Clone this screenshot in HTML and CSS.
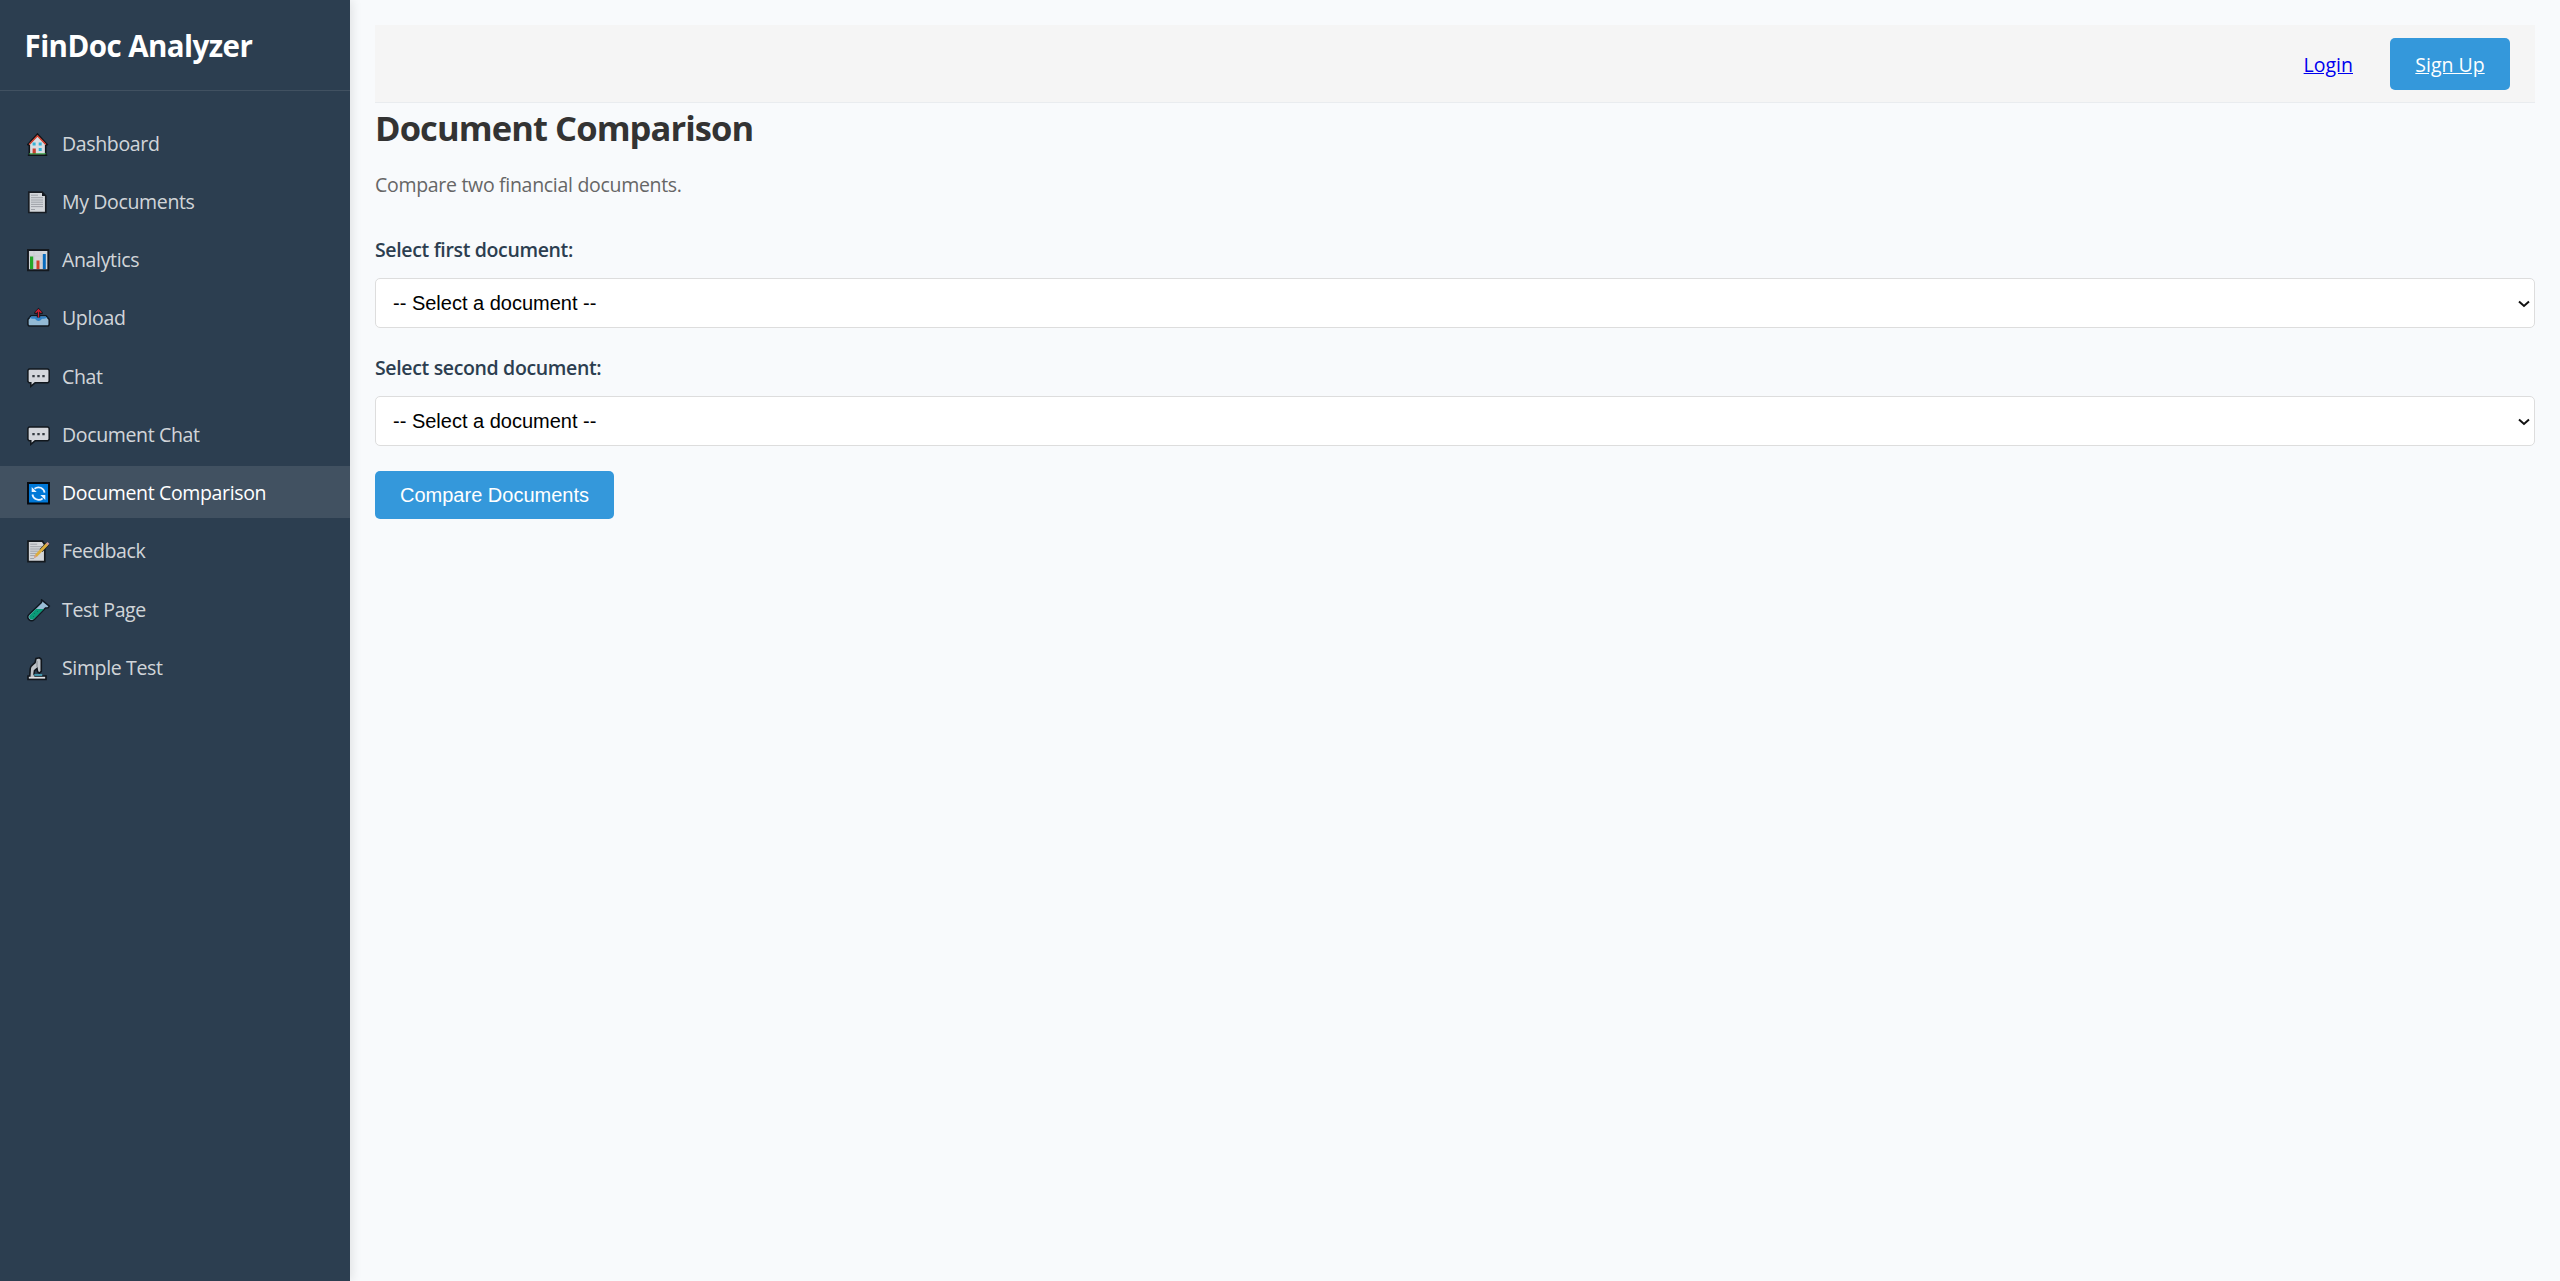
FILE: index.html
```html
<!DOCTYPE html>
<html lang="en">
<head>
<meta charset="utf-8">
<title>FinDoc Analyzer</title>
<link rel="stylesheet" href="styles.css">
</head>
<body>
<div class="app">
  <aside class="sidebar">
    <div class="brand">FinDoc Analyzer</div>
    <nav class="nav">
      <a class="nav-item"><svg class="icon" viewBox="0 0 24 24"><path d="M.8 11.5 10.5 1l9.700 10.500-1.500 1v9.800H2.300v-9.800z" fill="#d8dce1" stroke="#101418" stroke-width="1.600"/><path d="M2.200 11.500 10.500 2.800l8.300 8.700" fill="none" stroke="#cf3d2c" stroke-width="1.500"/><path d="M5.600 9.500h3v3h-3zM11.700 9.500h3v3h-3zM11.700 15h3v3h-3z" fill="#35b1d6"/><path d="M5.600 15.500h3.200v5.500H5.600z" fill="#ca3e2e"/><path d="M2 20.300h17v1.200H2z" fill="#2b9b35"/><path d="M.8 22.300h19.500" stroke="#101418" stroke-width="1.300"/></svg><span>Dashboard</span></a>
      <a class="nav-item"><svg class="icon" viewBox="0 0 24 24"><path d="M1.800 1.200h13.400L18.800 5v16.500h-17z" fill="#d3d6da" stroke="#171c23" stroke-width="1.700"/><path d="M15 1v4h4z" fill="#171c23"/><path d="M4 4.200h7M4 6.700h12M4 9h12M4 11.200h12M4 13.400h12M4 15.600h12M4 18.500h4" stroke="#9ea2a8"/></svg><span>My Documents</span></a>
      <a class="nav-item"><svg class="icon" viewBox="0 0 24 24"><path d="M1 1h20.300v20.300H1z" fill="#d2d5d9" stroke="#14191f" stroke-width="1.900"/><path d="M7 2v18M14 2v18M2 7h18M2 14h18" stroke="#c0c3c9" stroke-width=".5"/><path d="M3 7.500h3.200V20H3z" fill="#23a727"/><path d="M9.500 11.500h3V20h-3z" fill="#cf4227"/><path d="M15.800 5h3v15h-3z" fill="#086bbd"/></svg><span>Analytics</span></a>
      <a class="nav-item"><svg class="icon" viewBox="0 0 24 24"><path d="M.9 12.500 4 8.800h15l3.200 3.700v5.200l-1 1.200H2l-1.100-1.200z" fill="#93b9d4" stroke="#11171e" stroke-width="1.500"/><path d="M2.500 10.800 4.500 9.500h14l2 1.300-3.500 1h-2q-3.500 4.500-7 0H5z" fill="#3182c6"/><path d="m11.500.8 4.200 4.500v1.600h-2.500v3.700H9.800V6.900H7.300V5.300z" fill="#11171e"/><path d="M11.500 10.500V3M8.600 5.700l2.900-3 2.900 3" fill="none" stroke="#c91f32" stroke-width="1.300"/></svg><span>Upload</span></a>
      <a class="nav-item"><svg class="icon" viewBox="0 0 24 24"><path d="M2.100 2.900h18.800l1.300 1.300v11.300l-1.300 1.300H8.100l-4.300 3.500v-3.500H2.100L.9 15.500V4.200z" fill="#d5d7dc" stroke="#11171d" stroke-width="1.500"/><path d="M5.300 8.900h2.400v2.400H5.300zM10.300 8.900h2.400v2.400h-2.400zM15.300 8.900h2.400v2.400h-2.400z" fill="#343a40"/></svg><span>Chat</span></a>
      <a class="nav-item"><svg class="icon" viewBox="0 0 24 24"><path d="M2.100 2.900h18.800l1.300 1.300v11.300l-1.300 1.300H8.100l-4.300 3.500v-3.500H2.100L.9 15.500V4.200z" fill="#d5d7dc" stroke="#11171d" stroke-width="1.500"/><path d="M5.300 8.900h2.400v2.400H5.300zM10.300 8.900h2.400v2.400h-2.400zM15.300 8.900h2.400v2.400h-2.400z" fill="#343a40"/></svg><span>Document Chat</span></a>
      <a class="nav-item active"><svg class="icon" viewBox="0 0 24 24"><path d="M1 1h21v20.500H1z" fill="#0078d7" stroke="#05090f" stroke-width="1.900"/><path d="M7.500 6.700c4-3 9.500-.8 10.100 4M15.600 16.500c-4 3-9.500.5-10.200-4" fill="none" stroke="#e9f4ff" stroke-width="1.700"/><path d="M4.700 5v5h5zM18.300 18v-5h-5z" fill="#e9f4ff"/></svg><span>Document Comparison</span></a>
      <a class="nav-item"><svg class="icon" viewBox="0 0 24 24"><path d="M1 1.200h14.500l2.300 3.500v16.900H1z" fill="#d3d5d8" stroke="#14191e" stroke-width="1.700"/><path d="M3.200 4.200h7M3.200 6.700h12M3.200 9h11M3.200 11.200h10M3.200 13.400h8M3.200 15.600h7M3.200 18.500h4" stroke="#a0a3a8"/><path d="M14 10.700 20.500 3.800" stroke="#14191e" stroke-width="4"/><path d="m7 18 1-3.200L19 3.300l2.200 2L10 16.800z" fill="#dcae3d"/><path d="m7 18 1-3.200 2 2zM18.800 3.600l1.700-1.500 1.800 1.700-1.500 1.700z" fill="#d49b95"/></svg><span>Feedback</span></a>
      <a class="nav-item"><svg class="icon" viewBox="0 0 24 24"><path d="m14.600.8 7.700 6.400-1.200 1.500-2.600.2L7.300 20.400c-3.500 3.500-8.700-1.200-5.300-5L14.500 3.500z" fill="#99bdd5" stroke="#101820" stroke-width="1.500"/><path d="M8.800 10h8.100L7 19.700c-2.600 2.500-6.400-.9-4-3.700z" fill="#0a9a78"/><path d="M7 14.500h1M10 12.500h1M6 17.500h1" stroke="#087a61"/></svg><span>Test Page</span></a>
      <a class="nav-item"><svg class="icon" viewBox="0 0 24 24"><path d="M9 1.500 12.500.8l1.800 1.500v12l-2 1.700-1.800-1.500-.5-3-2.500 2.200-.5 3.500 1 1.800h11v3.400H1v-3.400h1.800l.4-7.200C3.500 8 7 7 8.100 5.500z" fill="#bfc3c8" stroke="#11161c" stroke-width="1.600"/><path d="M2 20.700h16" stroke="#e2e4e6" stroke-width="1.200"/><path d="M7.200 18h8" stroke="#4eb5cd" stroke-width="1.500"/><path d="M10 4v6" stroke="#85898f"/></svg><span>Simple Test</span></a>
    </nav>
  </aside>
  <main class="main">
    <header class="topbar">
      <a class="login" href="#">Login</a>
      <a class="signup" href="#">Sign Up</a>
    </header>
    <h1 class="title">Document Comparison</h1>
    <p class="subtitle">Compare two financial documents.</p>
    <form class="form">
      <label class="label" for="doc1">Select first document:</label>
      <div class="select-wrap">
        <select class="select" id="doc1"><option>-- Select a document --</option></select>
        <svg class="chevron" viewBox="0 0 12 8"><path d="m1 1.500 5 4.500 5-4.500"/></svg>
      </div>
      <label class="label" for="doc2">Select second document:</label>
      <div class="select-wrap">
        <select class="select" id="doc2"><option>-- Select a document --</option></select>
        <svg class="chevron" viewBox="0 0 12 8"><path d="m1 1.500 5 4.500 5-4.500"/></svg>
      </div>
      <button class="compare" type="button">Compare Documents</button>
    </form>
  </main>
</div>
</body>
</html>
```
FILE: styles.css
```css
* { box-sizing: border-box; }

body {
  margin: 0;
  font-family: "Open Sans", "Noto Sans", sans-serif;
  font-size: 19.5px;
  line-height: 26px;
  letter-spacing: -0.35px;
  color: #333;
  background: #f8fafc;
}

.app { display: flex; min-height: 1281px; }

.sidebar {
  width: 350px;
  flex: none;
  color: #fff;
  background: #2c3e50;
  box-shadow: 2px 0 10px rgba(0, 0, 0, 0.1);
}

.brand {
  height: 91px;
  padding: 26px 24.5px 0;
  font-size: 29.5px;
  font-weight: 700;
  line-height: 40px;
  letter-spacing: -0.55px;
  border-bottom: 1px solid rgba(255, 255, 255, 0.1);
}

.nav { display: flex; flex-direction: column; gap: 6.25px; padding-top: 25.5px; }

.nav-item {
  display: flex;
  align-items: center;
  gap: 11px;
  height: 52px;
  padding: 2px 0 0 27px;
  color: rgba(255, 255, 255, 0.8);
}

.nav-item.active { color: #fff; background: rgba(255, 255, 255, 0.1); }

.icon { width: 24px; height: 24px; margin-top: 2px; }

.main { flex: 1; padding: 25px; }

.topbar {
  display: flex;
  justify-content: flex-end;
  align-items: center;
  height: 78px;
  padding-right: 25px;
  background: #f5f5f5;
  border-bottom: 1px solid #e9ecef;
}

.login { margin-right: 37px; padding-top: 2px; letter-spacing: 0; color: #00e; }

.signup {
  width: 120px;
  height: 52px;
  padding-top: 1px;
  line-height: 52px;
  letter-spacing: 0;
  text-align: center;
  color: #fff;
  background: #3498db;
  border-radius: 5px;
}

.title { margin: 0; font-size: 34.5px; line-height: 50px; letter-spacing: -0.9px; }

.subtitle { margin: 19px 0 0; letter-spacing: -0.3px; color: #666; }

.form { display: flex; flex-direction: column; align-items: flex-start; padding-top: 39px; }

.label { font-weight: 600; color: #2c3e50; }

.select-wrap { display: grid; width: 100%; margin: 15px 0 27px; }

.select {
  grid-area: 1 / 1;
  width: 100%;
  height: 50px;
  padding: 0 17px;
  appearance: none;
  font: 20px "Liberation Sans", sans-serif;
  color: #000;
  background: #fff;
  border: 1px solid #ddd;
  border-radius: 5px;
}

.chevron {
  grid-area: 1 / 1;
  place-self: center end;
  width: 12px;
  height: 8px;
  margin: 1px 5px 0 0;
  fill: none;
  stroke: #111;
  stroke-width: 2;
  pointer-events: none;
}

.compare {
  width: 239px;
  height: 48px;
  margin-top: -2px;
  padding: 0;
  font: 20px "Liberation Sans", sans-serif;
  color: #fff;
  background: #3498db;
  border: 0;
  border-radius: 5px;
}
```
